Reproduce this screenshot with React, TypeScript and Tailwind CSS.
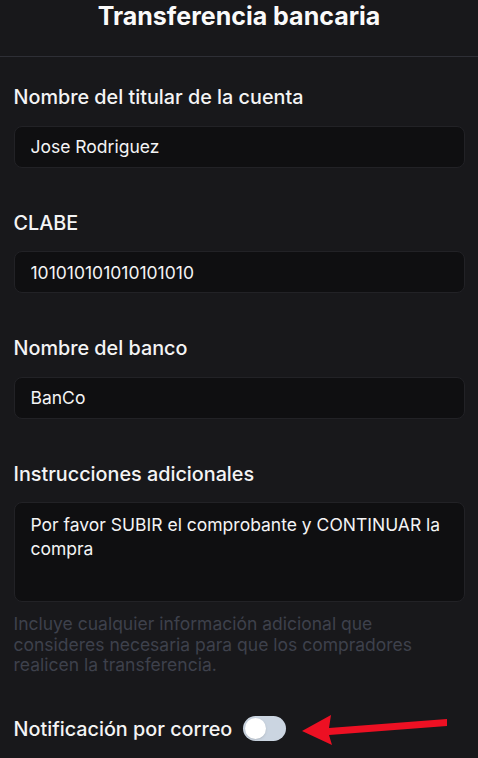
import * as React from "react";

function Field({ label, value }: { label: string; value: string }): React.ReactElement {
  return (
    <div className="flex flex-col">
      <label className="text-[19.8px] leading-7 font-medium text-[#f4f4f5]">{label}</label>
      <input
        readOnly
        value={value}
        className="mt-[14.5px] h-[42px] w-full rounded-lg border border-[#222226] bg-[#0f0f11] px-4 text-[17.5px] leading-6 text-[#f4f4f5] outline-none"
      />
    </div>
  );
}

export default function App(): React.ReactElement {
  const [notify, setNotify] = React.useState(false);

  return (
    <div
      className="min-h-[758px] bg-[#18181b] text-white"
      style={{ fontFamily: "Inter, 'Noto Sans', sans-serif" }}
    >
      <header className="flex h-[57px] items-start justify-center border-b border-[#2e2f36]">
        <h1 className="text-[25px] leading-8 font-bold text-[#fafafa]">Transferencia bancaria</h1>
      </header>

      <div className="flex flex-col gap-[41px] px-[13.5px] pt-[26px]">
        <Field label="Nombre del titular de la cuenta" value="Jose Rodriguez" />
        <Field label="CLABE" value="101010101010101010" />
        <Field label="Nombre del banco" value="BanCo" />

        <div className="flex flex-col">
          <label className="text-[19.8px] leading-7 font-medium text-[#f4f4f5]">Instrucciones adicionales</label>
          <textarea
            readOnly
            value="Por favor SUBIR el comprobante y CONTINUAR la compra"
            className="mt-[14.5px] h-[100px] w-full resize-none rounded-lg border border-[#222226] bg-[#0f0f11] px-4 pt-[10px] text-[17.5px] leading-6 text-[#f4f4f5] outline-none"
          />
          <p className="mt-3 text-[17.5px] leading-[20.5px] text-[#3e414c]">
            Incluye cualquier información adicional que consideres necesaria para que los compradores realicen la
            transferencia.
          </p>
        </div>
      </div>

      <div className="mt-[34px] flex items-center px-[13.5px]">
        <span className="text-[19.8px] leading-7 font-medium text-[#f4f4f5]">Notificación por correo</span>
        <button
          type="button"
          onClick={() => setNotify((v) => !v)}
          className={`ml-[11px] flex h-[25px] w-[43px] items-center rounded-full px-[1.5px] ${notify ? "bg-[#3b82f6]" : "bg-[#cbd5e1]"}`}
        >
          <span
            className={`h-[21px] w-[21px] rounded-full bg-white shadow transition-transform ${notify ? "translate-x-[19px]" : "translate-x-0"}`}
          />
        </button>
        <svg width="160" height="40" viewBox="0 0 160 40" className="-mt-[2px] ml-[13px]" aria-hidden="true">
          <polygon points="3,23 32,7 30,20 148,11 148,18 30,27 33,37" fill="#ed1023" />
        </svg>
      </div>
    </div>
  );
}
